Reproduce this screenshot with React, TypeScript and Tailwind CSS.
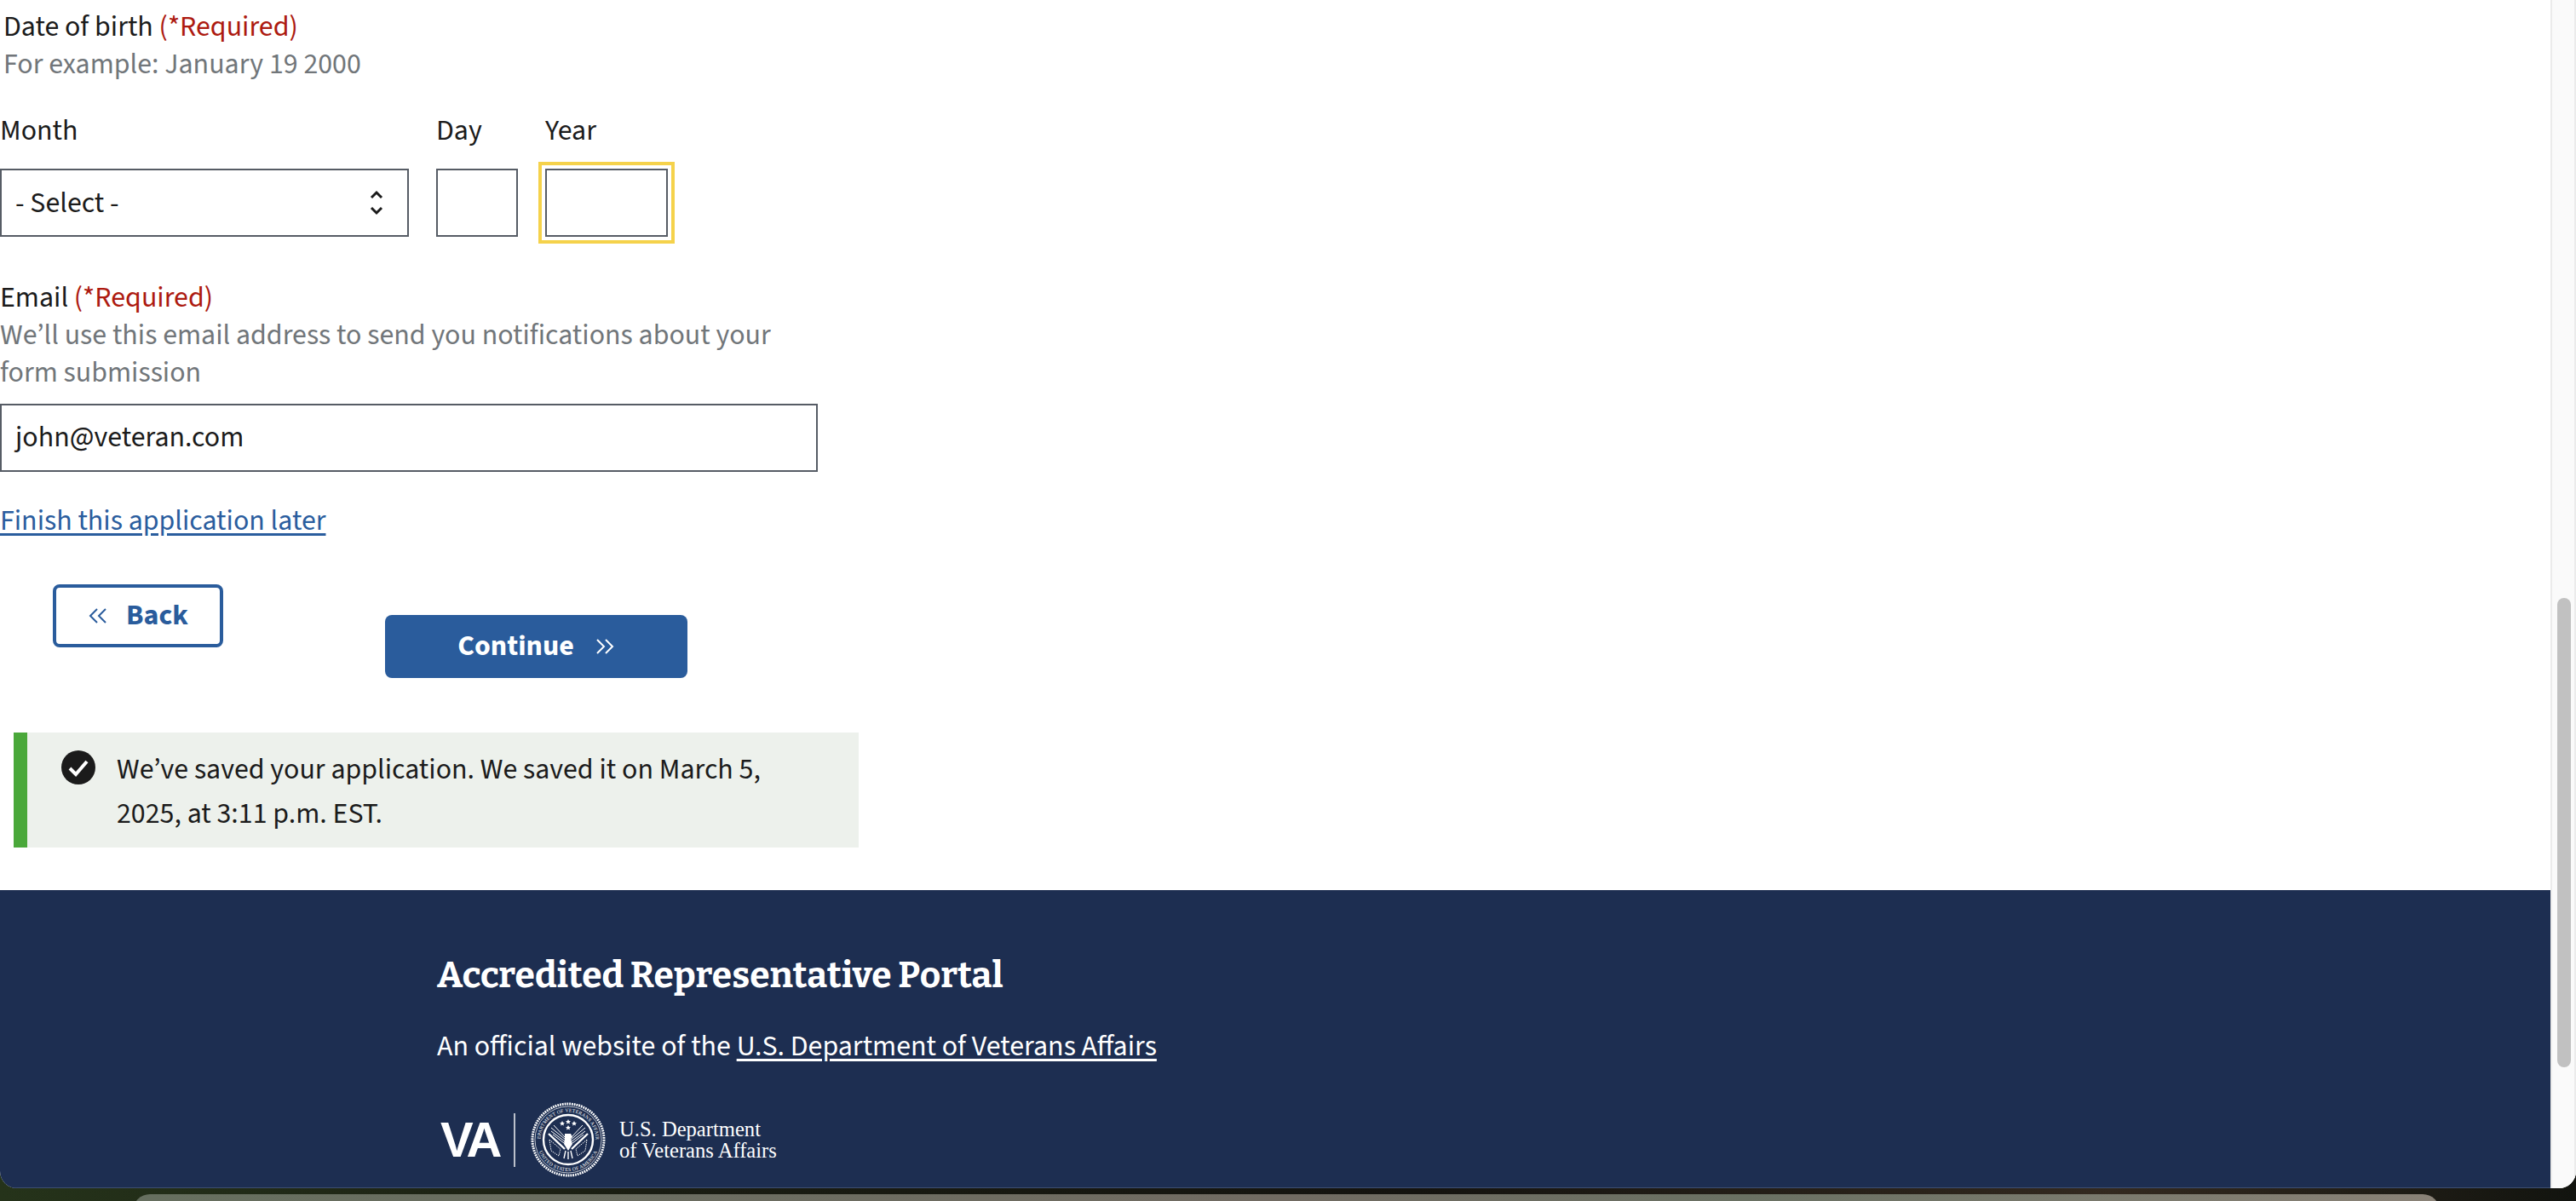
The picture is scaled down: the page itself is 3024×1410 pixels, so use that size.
import React from "react";

const sans = "font-['Source_Sans_3','Source_Sans_Pro','Noto_Sans',sans-serif]";

function ChevronsLeft({ className }: { className?: string }) {
  return (
    <svg viewBox="0 0 24 20" className={className} fill="none" stroke="currentColor" strokeWidth="2">
      <path d="M11 2 3 10l8 8M21 2l-8 8 8 8" />
    </svg>
  );
}

function ChevronsRight({ className }: { className?: string }) {
  return (
    <svg viewBox="0 0 24 20" className={className} fill="none" stroke="currentColor" strokeWidth="2">
      <path d="M3 2l8 8-8 8M13 2l8 8-8 8" />
    </svg>
  );
}

function Seal() {
  return (
    <svg viewBox="0 0 88 88" className="w-[88px] h-[88px]">
      <defs>
        <path id="sealTop" d="M11.500 44a32.500 32.500 0 0 1 65 0" />
        <path id="sealBottom" d="M7 44a37 37 0 0 0 74 0" />
      </defs>
      <circle cx="44" cy="44" r="42" fill="none" stroke="#fff" strokeWidth="3" strokeDasharray="1.800 1" />
      <circle cx="44" cy="44" r="39" fill="none" stroke="#fff" strokeWidth="0.700" />
      <circle cx="44" cy="44" r="29" fill="none" stroke="#fff" strokeWidth="2.400" />
      <text fill="#fff" fontSize="5.800" fontFamily="'Liberation Serif', serif" letterSpacing="0.200">
        <textPath href="#sealTop" startOffset="50%" textAnchor="middle">DEPARTMENT OF VETERANS AFFAIRS</textPath>
      </text>
      <text fill="#fff" fontSize="5.800" fontFamily="'Liberation Serif', serif" letterSpacing="0.300">
        <textPath href="#sealBottom" startOffset="50%" textAnchor="middle">UNITED STATES OF AMERICA</textPath>
      </text>
      {/* wings */}
      <path d="M41 42 27 27M41 44 24 30M40 46 24 34M39 48 26 38" stroke="#fff" strokeWidth="1" fill="none" />
      <path d="M47 42 61 27M47 44 64 30M48 46 64 34M49 48 62 38" stroke="#fff" strokeWidth="1" fill="none" />
      {/* swords */}
      <path d="M21 37 40 55M67 37 48 55" stroke="#fff" strokeWidth="2.400" fill="none" />
      {/* flags */}
      <path d="M22 44l13 11-2 8-9-6zM66 44 53 55l2 8 9-6z" fill="none" stroke="#fff" strokeWidth="1" strokeDasharray="1.500 1" />
      {/* body and tail */}
      <path d="M40 37h7l2 4-2 2 2 6-5 8-5-8 1-6z" fill="#fff" />
      <path d="M41 57l-2 9M44 58v9M47 57l2 9" stroke="#fff" strokeWidth="1.400" fill="none" />
      {/* stars */}
      <path d="M37 22l1 2h2l-1.600 1.500.6 2-2-1-2 1 .6-2L34 24h2zM44 20l1 2h2l-1.600 1.500.6 2-2-1-2 1 .6-2L41 22h2zM51 22l1 2h2l-1.600 1.500.6 2-2-1-2 1 .6-2L48 24h2zM44 27l1 2h2l-1.600 1.500.6 2-2-1-2 1 .6-2L41 29h2z" fill="#fff" />
    </svg>
  );
}

export default function App() {
  return (
    <div className="h-[1410px] w-full overflow-hidden bg-[linear-gradient(90deg,#25331a,#1a1d12_25%,#14130f_55%,#33291f_82%,#12140f)]">
      <div className="h-[1395px] flex rounded-b-[20px] overflow-hidden bg-white">
        <div className={`w-[2994px] flex flex-col ${sans} text-[#1b1b1b] text-[33.920px]`}>
          <div className="h-[1045px]">
            <div className="pl-1 pt-[10px] leading-[44px]">
              Date of birth <span className="text-[#ad1a10]">(*Required)</span>
              <div className="text-[#71767a]">For example: January 19 2000</div>
            </div>
            <div className="flex gap-8 mt-[33px]">
              <div className="w-[480px]">
                <div className="leading-[44px] translate-y-[1px]">Month</div>
                <div className="mt-[23px] h-[80px] border-2 border-[#565c65] flex items-center justify-between pl-4 pr-[28px]">
                  <span className="translate-y-[1px]">- Select -</span>
                  <svg viewBox="0 0 16 30" className="w-4 h-[30px]" fill="none" stroke="#1b1b1b" strokeWidth="3">
                    <path d="M2 9l6-6 6 6M2 21l6 6 6-6" />
                  </svg>
                </div>
              </div>
              <div className="w-[96px]">
                <div className="leading-[44px] translate-y-[1px]">Day</div>
                <div className="mt-[23px] h-[80px] border-2 border-[#565c65]" />
              </div>
              <div className="w-[144px]">
                <div className="leading-[44px] translate-y-[1px]">Year</div>
                <div className="mt-[23px] h-[80px] border-2 border-[#565c65] outline-[4px] outline-offset-[4px] outline-[#f5d24b]" />
              </div>
            </div>
            <div className="mt-[50px] leading-[44px]">
              Email <span className="text-[#ad1a10]">(*Required)</span>
              <div className="text-[#71767a] w-[960px]">We’ll use this email address to send you notifications about your form submission</div>
            </div>
            <div className="mt-[14px] w-[960px] h-[80px] border-2 border-[#565c65] flex items-center pl-4">john@veteran.com</div>
            <a className="block mt-[36px] leading-[44px] text-[#2a5d9e] underline underline-offset-4 w-fit">Finish this application later</a>
            <div className="flex items-start mt-[52px] pl-[62px]">
              <button className="w-[200px] h-[74px] border-[4px] border-[#2a5c9c] rounded-[8px] text-[#2a5c9c] font-bold flex items-center justify-center gap-[21px]">
                <ChevronsLeft className="w-6 h-5" /> Back
              </button>
              <button className="ml-[190px] mt-[36px] w-[355px] h-[74px] bg-[#2a5c9c] rounded-[8px] text-white font-bold flex items-center justify-center gap-6">
                Continue <ChevronsRight className="w-6 h-5" />
              </button>
            </div>
            <div className="mt-[64px] ml-4 w-[992px] h-[135px] bg-[#edf1ec] border-l-[16px] border-[#4aa83a] flex pl-10 pt-[20px] gap-[25px]">
              <svg viewBox="0 0 40 40" className="w-10 h-10 shrink-0 mt-[1px]">
                <circle cx="20" cy="20" r="20" fill="#1b1b1b" />
                <path d="M10 21l7 7 13-15" fill="none" stroke="#fff" strokeWidth="4" />
              </svg>
              <div className="leading-[52px] -mt-[2px] w-[800px]">We’ve saved your application. We saved it on March 5, 2025, at 3:11 p.m. EST.</div>
            </div>
          </div>
          <div className="flex-1 bg-[#1d2e51] border-b border-[#3d4e70] text-white pl-[513px] pt-[74px]">
            <div className="font-['Bitter','DejaVu_Serif',serif] font-bold text-[42.500px] leading-[52px]">Accredited Representative Portal</div>
            <div className="mt-[36px] leading-[44px]">
              An official website of the <a className="underline underline-offset-4">U.S. Department of Veterans Affairs</a>
            </div>
            <div className="flex items-center mt-[43px]">
              <span className="font-['Liberation_Sans',sans-serif] font-bold text-[58px] leading-none tracking-[-4px] ml-[4px] w-[86px]">VA</span>
              <span className="w-[2px] h-[63px] bg-white/70" />
              <span className="ml-[18px]"><Seal /></span>
              <div className="ml-4 font-['Liberation_Serif',serif] text-[24.600px] leading-[25px]">
                <div>U.S. Department</div>
                <div>of Veterans Affairs</div>
              </div>
            </div>
          </div>
        </div>
        <div className="flex-1 bg-[#fafafa] border-x-2 border-[#ebebeb] pl-[6px] pr-1">
          <div className="mt-[702px] h-[551px] w-4 rounded-full bg-[#c1c1c1]" />
        </div>
      </div>
      <div className="ml-[156px] mr-[160px] mt-[7px] h-[20px] rounded-t-[20px] bg-[linear-gradient(90deg,#666f5f,#716b62_50%,#6a7163_70%,#8a8277)]" />
    </div>
  );
}
